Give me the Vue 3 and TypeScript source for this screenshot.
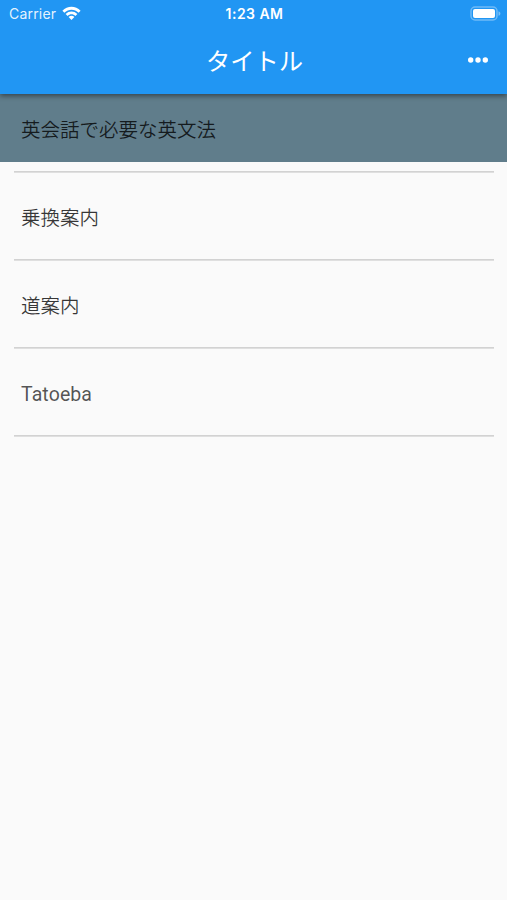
<script setup lang="ts">
import { ref } from 'vue'

const items: string[] = ['英会話で必要な英文法', '乗換案内', '道案内', 'Tatoeba']
const selected = ref<number>(0)
</script>

<template>
  <div class="screen">
    <header class="app-bar">
      <div class="status-bar">
        <div class="carrier">
          <span class="carrier-name">Carrier</span>
          <svg class="wifi" width="19" height="15" viewBox="0 0 19 15">
            <path d="M0.4 4.7C5.3 -.5 13.7 -.5 18.6 4.7L16.6 6.7C12.5 2.7 6.5 2.7 2.4 6.7Z" />
            <path d="M3.6 7.9C7 4.6 12 4.6 15.4 7.9L13.4 9.9C11.2 7.8 7.8 7.8 5.6 9.9Z" />
            <path d="M6.6 11C8.3 9.3 10.7 9.3 12.4 11L9.5 14Z" />
          </svg>
        </div>
        <span class="time">1:23 AM</span>
        <svg class="battery" width="31" height="15" viewBox="0 0 31 15">
          <rect x="1" y="1" width="26" height="13" rx="4" fill="none" stroke="#fff" stroke-opacity=".35" stroke-width="1.5" />
          <rect x="3" y="3" width="22" height="9" rx="2" fill="#fff" />
          <path d="M28.5 5.2C31 6 31 9 28.5 9.8Z" fill="#fff" fill-opacity=".4" />
        </svg>
      </div>
      <div class="toolbar">
        <h1 class="title">タイトル</h1>
        <button class="more" type="button" aria-label="メニュー">
          <svg width="20" height="6" viewBox="0 0 20 6">
            <circle cx="2.7" cy="3" r="2.7" />
            <circle cx="10" cy="3" r="2.7" />
            <circle cx="17.3" cy="3" r="2.7" />
          </svg>
        </button>
      </div>
    </header>
    <ul class="list">
      <li v-for="(item, index) in items" :key="item" class="entry">
        <div class="row" :class="{ active: index === selected }" @click="selected = index">{{ item }}</div>
        <div class="divider"></div>
      </li>
    </ul>
  </div>
</template>

<style>
body {
  margin: 0;
  background: #fafafa;
}
</style>

<style scoped>
.screen {
  min-height: 900px;
  background: #fafafa;
  font-family: "Noto Sans CJK JP", sans-serif;
}
.app-bar {
  position: relative;
  height: 94px;
  background: #2196f3;
  color: #fff;
  box-shadow: 0 2px 5px rgba(0, 0, 0, 0.45);
}
.status-bar {
  display: grid;
  grid-template-columns: 1fr auto 1fr;
  align-items: center;
  height: 27px;
  padding: 0 6px 0 9px;
  font-family: Inter, sans-serif;
  font-size: 14px;
}
.carrier {
  display: flex;
  align-items: center;
  gap: 6px;
  color: rgba(255, 255, 255, 0.9);
}
.carrier-name {
  letter-spacing: 0.2px;
}
.wifi {
  fill: #fff;
}
.time {
  margin-right: 1px;
  font-weight: 600;
  letter-spacing: 0.45px;
}
.battery {
  justify-self: end;
}
.toolbar {
  display: grid;
  grid-template-columns: 61px 1fr 59px;
  align-items: center;
  height: 65px;
}
.title {
  grid-column: 2;
  margin: 0;
  text-align: center;
  font-size: 24.3px;
  font-weight: 400;
  line-height: 36px;
}
.more {
  display: flex;
  justify-content: center;
  padding: 0;
  border: 0;
  background: none;
  fill: #fff;
}
.list {
  margin: 0;
  padding: 0;
  list-style: none;
}
.entry {
  height: 88px;
}
.row {
  display: flex;
  align-items: center;
  box-sizing: border-box;
  height: 68px;
  padding: 6px 21px 0;
  color: rgba(0, 0, 0, 0.78);
  font-family: Roboto, "Noto Sans CJK JP", sans-serif;
  font-size: 19.5px;
  font-weight: 350;
  line-height: 28px;
}
.entry:last-child .row {
  color: rgba(0, 0, 0, 0.68);
  font-weight: 400;
  letter-spacing: 0.1px;
}
.row.active {
  background: #607d8b;
}
.divider {
  height: 2px;
  margin: 9px 13px 9px 14px;
  background: linear-gradient(#d2d2d2 50%, #dfdfdf 50%);
}
</style>
